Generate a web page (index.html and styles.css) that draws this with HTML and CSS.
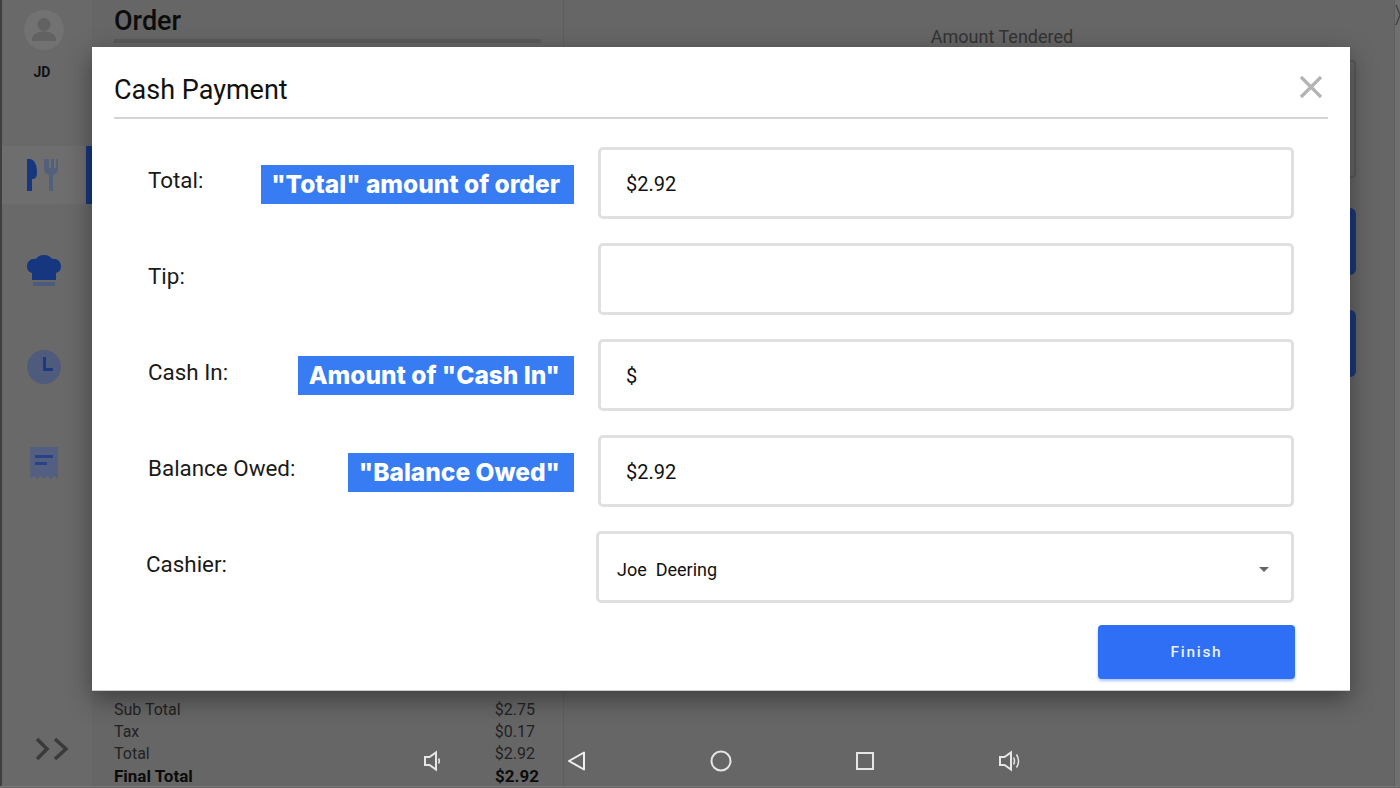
FILE: index.html
```html
<!DOCTYPE html>
<html lang="en">
<head>
<meta charset="utf-8">
<title>Cash Payment</title>
<link rel="stylesheet" href="styles.css">
</head>
<body>
<div class="app">
  <aside class="sidebar">
    <svg class="avatar" viewBox="0 0 40 40" width="40" height="40"><circle cx="20" cy="20" r="20" fill="#727272"/><circle cx="20" cy="14.5" r="6.5" fill="#626262"/><path d="M8 29c0-5 6-7.5 12-7.500s12 2.500 12 7.500v2H8z" fill="#626262"/></svg>
    <div class="initials">JD</div>
    <div class="nav-item nav-active">
      <svg viewBox="0 0 34 34" width="34" height="34"><path d="M1 1h3c5 1 7 6 7 14 0 3-1 5-3 6H6v12H1z" fill="#16367f"/><path d="M18 1v9c0 4 2 6 5 7v16h4V17c3-1 5-3 5-7V1h-2v9h-2V1h-3v9h-2V1z" fill="#53607c"/></svg>
    </div>
    <div class="nav-item">
      <svg viewBox="0 0 36 34" width="36" height="34"><path d="M18 1c4 0 7 2 8 4 5-1 9 3 9 7 0 4-2 6-5 7v7H6v-7c-3-1-5-3-5-7 0-4 4-8 9-7 1-2 4-4 8-4z" fill="#16367f"/><rect x="7" y="28" width="22" height="4" fill="#4c5a7c"/></svg>
    </div>
    <div class="nav-item">
      <svg viewBox="0 0 34 34" width="34" height="34"><circle cx="17" cy="17" r="17" fill="#4f5b7d"/><path d="M16 7h3v11h7v3H16z" fill="#1c3a80"/></svg>
    </div>
    <div class="nav-item">
      <svg viewBox="0 0 30 34" width="30" height="34"><path d="M1 1h28v32l-3.500-3-3.500 3-3.500-3-3.500 3-3.500-3-3.500 3-3.500-3-3 3z" fill="#535f80"/><path d="M6 9h18v3H6zM6 16h12v3H6z" fill="#2a4285"/></svg>
    </div>
    <svg class="expand" viewBox="0 0 34 24" width="34" height="24"><path d="M2 2l10 10L2 22M20 2l11 10-11 10" fill="none" stroke="#3a3a3a" stroke-width="3.500"/></svg>
  </aside>
  <section class="order">
    <h1 class="order-title">Order</h1>
    <div class="order-rule"></div>
    <dl class="totals">
      <div class="total-row"><dt>Sub Total</dt><dd>$2.75</dd></div>
      <div class="total-row"><dt>Tax</dt><dd>$0.17</dd></div>
      <div class="total-row"><dt>Total</dt><dd>$2.92</dd></div>
      <div class="total-row total-final"><dt>Final Total</dt><dd>$2.92</dd></div>
    </dl>
  </section>
  <section class="tender">
    <div class="tender-label">Amount Tendered</div>
    <div class="tender-box"></div>
    <div class="tender-btn"></div>
    <div class="tender-btn"></div>
  </section>
  <div class="edge-strip">
    <svg viewBox="0 0 6 24" width="6" height="24"><path d="M1 2l4 10-4 10" fill="none" stroke="#444" stroke-width="1.500"/></svg>
  </div>
</div>

<div class="modal">
  <header class="modal-head">
    <h2 class="modal-title">Cash Payment</h2>
    <svg class="close" viewBox="0 0 24 24" width="24" height="24"><path d="M2 2l20 20M22 2L2 22" stroke="#b4b4b4" stroke-width="3.200" fill="none"/></svg>
  </header>
  <div class="form">
    <div class="row">
      <span class="label">Total:</span>
      <span class="badge badge-low">"Total" amount of order</span>
      <div class="field">$2.92</div>
    </div>
    <div class="row">
      <span class="label">Tip:</span>
      <div class="field"></div>
    </div>
    <div class="row">
      <span class="label">Cash In:</span>
      <span class="badge">Amount of "Cash In"</span>
      <div class="field">$</div>
    </div>
    <div class="row">
      <span class="label">Balance Owed:</span>
      <span class="badge badge-low">"Balance Owed"</span>
      <div class="field">$2.92</div>
    </div>
    <div class="row row-select">
      <span class="label">Cashier:</span>
      <div class="field field-select">
        <span class="select-value">Joe&nbsp; Deering</span>
        <span class="caret"></span>
      </div>
    </div>
  </div>
  <div class="actions"><button class="finish" type="button">Finish</button></div>
</div>

<nav class="sysbar">
  <svg viewBox="0 0 24 24" width="24" height="24"><path d="M4 8h4.500L15 3.500v17L8.500 16H4z" fill="none" stroke="#e6e6e6" stroke-width="2"/><path d="M17.500 9.500c1 1.500 1 3.500 0 5" fill="none" stroke="#e6e6e6" stroke-width="1.500"/></svg>
  <svg viewBox="0 0 24 24" width="24" height="24"><path d="M19 3.500v17L4 12z" fill="none" stroke="#f0f0f0" stroke-width="2" stroke-linejoin="round"/></svg>
  <svg viewBox="0 0 24 24" width="24" height="24"><circle cx="12" cy="12" r="9.500" fill="none" stroke="#e6e6e6" stroke-width="2"/></svg>
  <svg viewBox="0 0 24 24" width="24" height="24"><rect x="4" y="4" width="16" height="16" fill="none" stroke="#e6e6e6" stroke-width="2"/></svg>
  <svg viewBox="0 0 24 24" width="24" height="24"><path d="M3 8h4.500L14 3.500v17L7.500 16H3z" fill="none" stroke="#e6e6e6" stroke-width="2"/><path d="M16.500 8.500c1.300 2.300 1.300 4.700 0 7M19.500 5.500c2.500 4 2.500 9 0 13" fill="none" stroke="#e6e6e6" stroke-width="1.500"/></svg>
</nav>
</body>
</html>
```
FILE: styles.css
```css
* { box-sizing: border-box; }
html, body { margin: 0; padding: 0; height: 100%; }
body {
  width: 1400px;
  height: 788px;
  overflow: hidden;
  position: relative;
  background: #666;
  font-family: Roboto, "Liberation Sans", sans-serif;
  color: #111;
}

/* Dimmed application behind the dialog */
.app {
  display: grid;
  grid-template-columns: 92px 472px 1fr 6px;
  height: 787px;
  border-bottom: 1px solid #777;
}
.sidebar {
  display: flex;
  flex-direction: column;
  align-items: center;
  background: #696969;
  border-left: 2px solid #3f3f3f;
  padding: 10px 6px 0 0;
}
.avatar { flex: none; }
.initials {
  margin-top: 14px;
  margin-right: 4px;
  font-size: 14px;
  font-weight: 700;
  color: #111;
}
.nav-item {
  flex: none;
  width: 82px;
  height: 58px;
  margin-top: 23px;
  display: flex;
  align-items: center;
  justify-content: center;
}
.nav-active {
  margin-top: 66px;
  margin-right: -6px;
  width: 90px;
  padding-left: 6px;
  padding-right: 8px;
  background: #6e6e6e;
  border-right: 6px solid #16367f;
}
.nav-item + .nav-item { margin-top: 38px; }
.expand { margin-top: auto; margin-bottom: 25px; margin-left: 15px; }

.order {
  display: flex;
  flex-direction: column;
  padding: 0 22px;
  background: #666;
  border-right: 1px solid #5e5e5e;
}
.order-title {
  margin: 7px 0 0;
  font-size: 27px;
  font-weight: 500;
  line-height: 29px;
  color: #0c0c0c;
}
.order-rule { height: 4px; margin-top: 3px; background: #5a5a5a; }
.totals { margin: auto 0 -1px; font-size: 16px; line-height: 22px; color: #222; }
.total-row { display: flex; justify-content: space-between; padding-right: 6px; }
.total-row dt, .total-row dd { margin: 0; }
.total-final { font-size: 17px; font-weight: 700; color: #0c0c0c; padding-right: 2px; }

.tender {
  display: flex;
  flex-direction: column;
  padding-top: 26px;
  padding-right: 38px;
  align-items: stretch;
}
.tender-label { text-align: center; font-size: 18px; line-height: 21px; color: #333; padding-left: 84px; }
.tender-box { height: 118px; margin-top: 13px; margin-left: 40px; border: 2px solid #595959; border-radius: 4px; }
.tender-btn { height: 67px; margin-top: 30px; margin-left: 40px; background: #1a3878; border-radius: 6px; }
.tender-btn + .tender-btn { margin-top: 35px; }
.edge-strip { background: #707070; border-left: 1px solid #5f5f5f; padding-top: 3px; }
.edge-strip svg { display: block; }

/* Dialog */
.modal {
  position: absolute;
  left: 92px;
  top: 47px;
  width: 1258px;
  height: 644px;
  background: #fff;
  padding: 0 22px;
  box-shadow: 0 8px 24px rgba(0, 0, 0, .4);
  border-bottom: 1px solid #ccc;
}
.modal-head {
  display: flex;
  align-items: center;
  justify-content: space-between;
  height: 72px;
  padding-top: 15px;
  padding-right: 5px;
  border-bottom: 2px solid #d4d4d4;
}
.modal-title { margin: 0; font-size: 27px; font-weight: 400; color: #111; }
.close { margin-top: -6px; }
.form {
  display: flex;
  flex-direction: column;
  gap: 24px;
  margin-top: 28px;
  padding-left: 34px;
  padding-right: 34px;
}
.row { display: flex; align-items: center; height: 72px; }
.label { font-size: 22.400px; margin-bottom: 6px; margin-right: auto; color: #1a1a1a; }
.badge {
  display: block;
  margin-right: 24px;
  padding: 0 14px 0 10.500px;
  height: 39px;
  line-height: 39px;
  background: #377cf2;
  color: #fff;
  font-family: Inter, Lato, sans-serif;
  font-size: 24.500px;
  font-weight: 800;
  white-space: nowrap;
}
.badge-low { margin-top: 3px; }
.field {
  flex: none;
  width: 696px;
  height: 72px;
  display: flex;
  align-items: center;
  padding-left: 25px;
  padding-top: 2px;
  border: 3px solid #e0e0e0;
  border-radius: 5px;
  font-size: 20px;
  color: #111;
}
.row-select { margin-left: -2px; }
.field-select {
  width: 698px;
  justify-content: space-between;
  padding: 4px 22px 0 18px;
  font-size: 18px;
}
.caret {
  width: 0;
  height: 0;
  border-left: 5px solid transparent;
  border-right: 5px solid transparent;
  border-top: 5px solid #666;
}
.actions { display: flex; justify-content: flex-end; margin-top: 22px; padding-right: 33px; }
.finish {
  width: 197px;
  height: 54px;
  border: 0;
  border-radius: 4px;
  background: #2f6ff5;
  color: #e8f0ff;
  font-family: Roboto, sans-serif;
  font-size: 15.500px;
  font-weight: 500;
  letter-spacing: 1.700px;
  box-shadow: 0 2px 3px rgba(47, 111, 245, .4);
}

/* Android navigation bar lying over the page */
.sysbar {
  position: absolute;
  left: 421px;
  bottom: 15px;
  display: flex;
  gap: 120px;
}
```
